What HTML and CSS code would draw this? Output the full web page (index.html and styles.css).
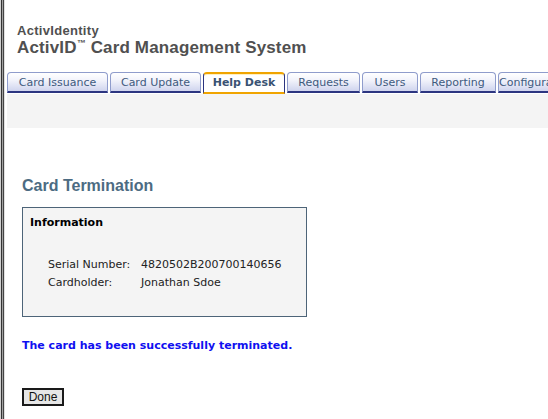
FILE: index.html
```html
<!DOCTYPE html>
<html lang="en">
<head>
    <meta charset="UTF-8">
    <title>Card Termination</title>
    <link rel="stylesheet" href="styles.css">
</head>
<body>
    <div class="frame">
        <div class="header">
            <div class="company">ActivIdentity</div>
            <div class="product">ActivID<sup>™</sup> Card Management System</div>
        </div>
        <ul class="tabs">
            <li class="tab" style="width:101px">Card Issuance</li>
            <li class="tab" style="width:91px">Card Update</li>
            <li class="tab active" style="width:82px">Help Desk</li>
            <li class="tab" style="width:73px">Requests</li>
            <li class="tab" style="width:56px">Users</li>
            <li class="tab" style="width:76px">Reporting</li>
            <li class="tab" style="width:70px">Configuration</li>
        </ul>
        <div class="subbar"></div>
        <div class="content">
            <h2>Card Termination</h2>
            <div class="info">
                <div class="info-title">Information</div>
                <table class="info-table">
                    <tr><td class="label">Serial Number:</td><td>4820502B200700140656</td></tr>
                    <tr><td class="label">Cardholder:</td><td>Jonathan Sdoe</td></tr>
                </table>
            </div>
            <p class="message">The card has been successfully terminated.</p>
            <button class="done">Done</button>
        </div>
    </div>
</body>
</html>
```

FILE: styles.css
```css
body {
    margin: 0;
    background-color: white;
    font-family: Verdana, "DejaVu Sans", sans-serif;
    overflow: hidden;
}
.frame {
    height: 419px;
    border-left: 1px solid #d0d0d0;
    box-shadow: inset 1px 0 0 #333, inset 2px 0 0 #a0a0a0, inset 3px 0 0 #444, inset 4px 0 0 #e0e0e0;
    padding-left: 6px;
    box-sizing: border-box;
    overflow: hidden;
}
.header {
    padding: 23px 0 0 10px;
    height: 49px;
    box-sizing: border-box;
    color: #505050;
    font-family: "Liberation Sans", Arial, sans-serif;
    font-weight: bold;
}
.company {
    font-size: 13px;
    line-height: 15px;
    letter-spacing: 0.3px;
}
.product {
    font-size: 17px;
    line-height: 20px;
    letter-spacing: 0.15px;
}
.product sup {
    font-size: 9px;
    vertical-align: 7px;
    line-height: 0;
}
.tabs {
    list-style: none;
    margin: 0;
    padding: 0;
    display: flex;
    gap: 2px;
    height: 22px;
    margin-top: 23px;
    white-space: nowrap;
}
.tab {
    flex-shrink: 0;
    height: 21px;
    box-sizing: border-box;
    border: 1px solid #8f9ccc;
    border-bottom: 2px solid #2c3580;
    border-radius: 4px 4px 0 0;
    background: linear-gradient(#ffffff, #f2f3fb 40%, #cfd4ee);
    color: #3e5a7e;
    font-size: 11px;
    line-height: 19px;
    text-align: center;
    overflow: hidden;
    position: relative;
}
.tab.active {
    background: #ffffff;
    border: 1px solid #2c3580;
    border-top: 2px solid #f0a400;
    border-bottom: 2px solid #f0a400;
    box-shadow: inset 0 1px 0 #fff0c0;
    color: #3a5373;
    font-weight: bold;
    line-height: 17px;
    height: 22px;
}
.subbar {
    background-color: #f4f4f4;
    height: 34px;
}
.content {
    padding: 0 0 0 15px;
}
h2 {
    margin: 49px 0 0 0;
    font-family: "Liberation Sans", Arial, sans-serif;
    font-size: 16px;
    line-height: 18px;
    color: #4c6b82;
}
.info {
    margin-top: 12px;
    width: 285px;
    height: 110px;
    box-sizing: border-box;
    background-color: #f4f4f4;
    border: 1px solid #4d6478;
    padding: 8px 7px 5px;
}
.info-title {
    font-size: 11px;
    font-weight: bold;
    color: #000;
    line-height: 14px;
}
.info-table {
    margin: 25px 0 0 18px;
    border-collapse: collapse;
    font-size: 11px;
    color: #222;
}
.info-table td {
    padding: 0;
    height: 18px;
}
.info-table .label {
    width: 93px;
}
.message {
    margin: 22px 0 0 0;
    font-size: 11px;
    font-weight: bold;
    color: #1010f0;
    line-height: 14px;
}
.done {
    margin-top: 35px;
    width: 42px;
    height: 18px;
    padding: 0;
    background-color: #e6e6e6;
    border: 2px solid #1a1a1a;
    font-family: "Liberation Sans", Arial, sans-serif;
    font-size: 12px;
    color: #111;
}
```
